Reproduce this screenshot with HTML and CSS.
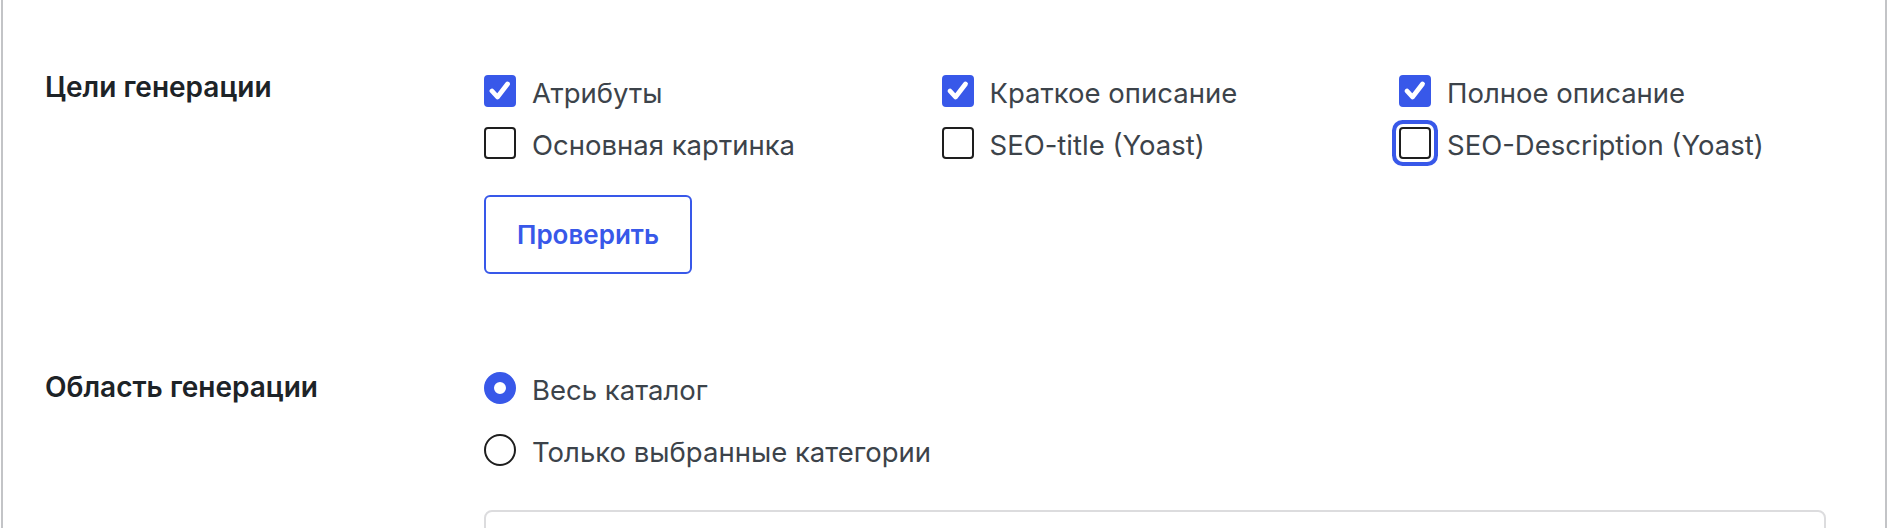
FILE: index.html
```html
<!DOCTYPE html>
<html lang="ru">
<head>
    <meta charset="UTF-8">
    <meta name="viewport" content="width=device-width, initial-scale=1.0">
    <title>Настройки генерации</title>
    <link rel="stylesheet" href="styles.css">
</head>
<body>

    <div class="card">
        <div class="row goals">
            <div class="row-title">Цели генерации</div>
            <div class="row-field">
                <div class="options">
                    <label class="option">
                        <span class="check is-checked">
                            <svg viewBox="0 0 32 32"><path d="M8 16l5.5 6 10-13"/></svg>
                        </span>
                        <span class="option-text">Атрибуты</span>
                    </label>
                    <label class="option">
                        <span class="check is-checked">
                            <svg viewBox="0 0 32 32"><path d="M8 16l5.5 6 10-13"/></svg>
                        </span>
                        <span class="option-text">Краткое описание</span>
                    </label>
                    <label class="option">
                        <span class="check is-checked">
                            <svg viewBox="0 0 32 32"><path d="M8 16l5.5 6 10-13"/></svg>
                        </span>
                        <span class="option-text">Полное описание</span>
                    </label>
                    <label class="option">
                        <span class="check"></span>
                        <span class="option-text">Основная картинка</span>
                    </label>
                    <label class="option">
                        <span class="check"></span>
                        <span class="option-text">SEO-title (Yoast)</span>
                    </label>
                    <label class="option">
                        <span class="check is-focused"></span>
                        <span class="option-text">SEO-Description (Yoast)</span>
                    </label>
                </div>
                <button type="button" class="btn-check">Проверить</button>
            </div>
        </div>

        <div class="row scope">
            <div class="row-title">Область генерации</div>
            <div class="row-field">
                <div class="radios">
                    <label class="option">
                        <span class="radio is-checked"></span>
                        <span class="option-text">Весь каталог</span>
                    </label>
                    <label class="option">
                        <span class="radio"></span>
                        <span class="option-text">Только выбранные категории</span>
                    </label>
                </div>
                <div class="category-box"></div>
            </div>
        </div>
    </div>

</body>
</html>
```

FILE: styles.css
```css
* {
    margin: 0;
    padding: 0;
    box-sizing: border-box;
    font-family: Inter, 'Noto Sans', sans-serif;
}
body {
    background: #fff;
    overflow: hidden;
}
.card {
    margin: 0 1px;
    min-height: 528px;
    padding: 0 59px 0 42px;
    background: #fff;
    border-left: 2px solid #c3c4c7;
    border-right: 2px solid #c3c4c7;
}
.row {
    display: grid;
    grid-template-columns: 439px 1fr;
    padding-top: 71px;
}
.row + .row {
    padding-top: 97px;
}
.row-title {
    font-size: 28px;
    line-height: 32px;
    font-weight: 600;
    color: #1d2327;
}
.goals .row-field {
    padding-top: 4px;
}
.scope .row-field {
    padding-top: 1px;
}
.options {
    display: grid;
    grid-template-columns: repeat(3, 457.5px);
    row-gap: 20px;
}
.option {
    display: flex;
    align-items: center;
    gap: 16px;
    height: 32px;
    font-size: 27.5px;
    color: #3c434a;
    cursor: pointer;
}
.option-text {
    padding-top: 3px;
    white-space: nowrap;
}
.check {
    flex: none;
    width: 32px;
    height: 32px;
    border: 2px solid #1e1e1e;
    border-radius: 4px;
    background: #fff;
}
.check svg {
    display: block;
    width: 32px;
    height: 32px;
    margin: -2px;
    fill: none;
    stroke: #fff;
    stroke-width: 4.8;
    stroke-linecap: round;
    stroke-linejoin: round;
}
.check.is-checked {
    background: #3858e9;
    border-color: #3858e9;
}
.check.is-focused {
    box-shadow: 0 0 0 3px #fff, 0 0 0 7px #3858e9;
}
.btn-check {
    display: flex;
    align-items: center;
    height: 79px;
    margin-top: 36px;
    padding: 0 31px;
    background: #fff;
    border: 2px solid #3858e9;
    border-radius: 6px;
    color: #3858e9;
    font-size: 26px;
    font-weight: 600;
    cursor: pointer;
}
.radios {
    display: flex;
    flex-direction: column;
    gap: 30px;
}
.radio {
    flex: none;
    width: 32px;
    height: 32px;
    border: 2px solid #1e1e1e;
    border-radius: 50%;
    background: #fff;
}
.radio.is-checked {
    border: 10px solid #3858e9;
}
.category-box {
    height: 200px;
    margin-top: 44px;
    border: 2px solid #dcdcde;
    border-radius: 8px;
}
```
